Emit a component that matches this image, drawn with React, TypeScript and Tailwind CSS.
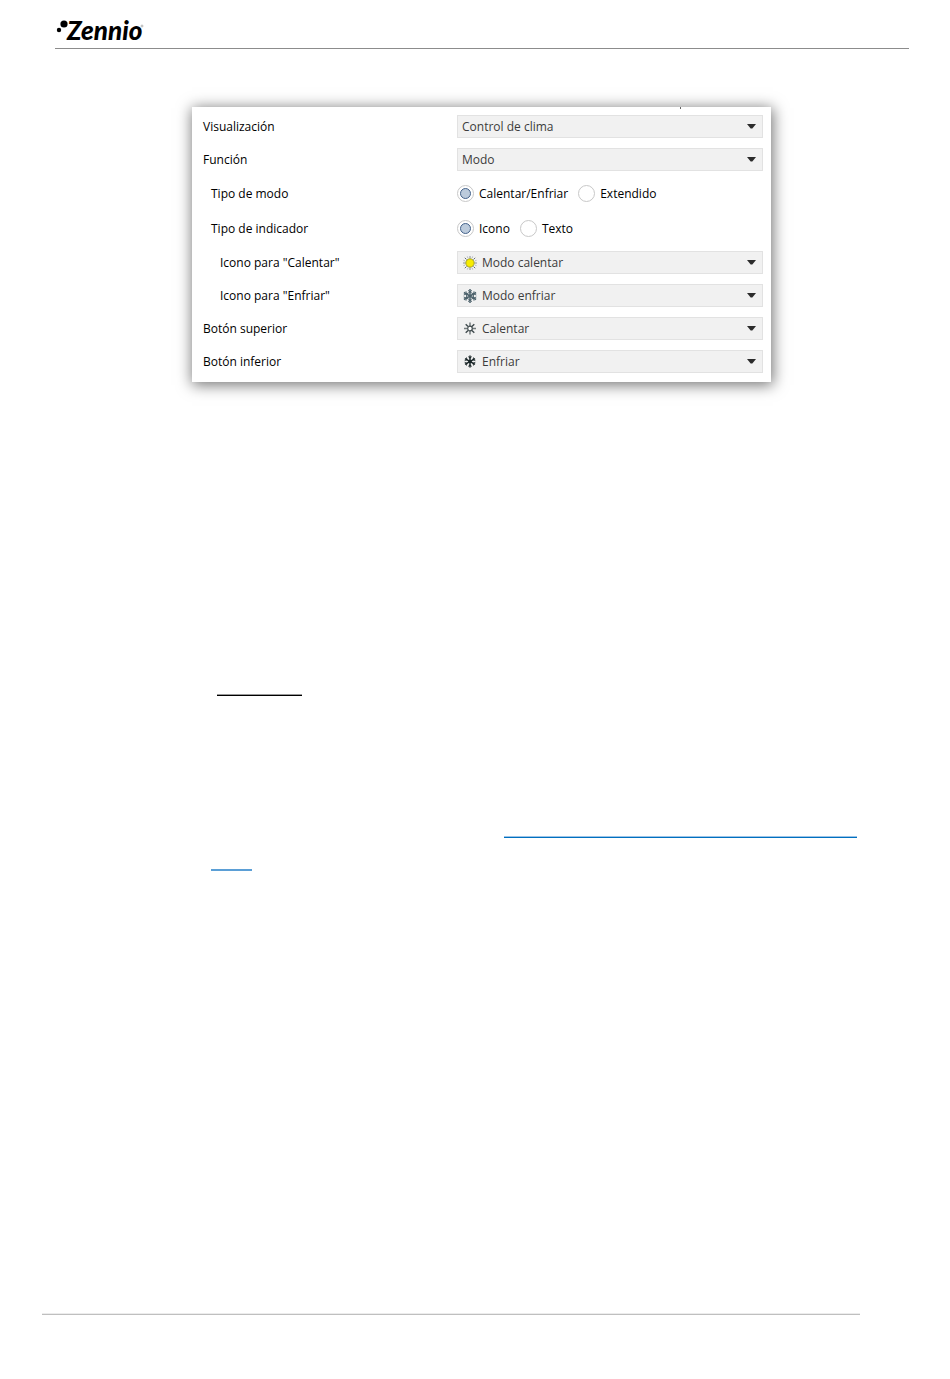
import type { ReactNode } from 'react';
import { clsx } from 'clsx';

const SunIcon = () => (
  <svg width="16" height="16" viewBox="0 0 16 16" fill="none">
    <g stroke="#5f6a6e" strokeWidth="1">
      <path d="M8 1v2.5M8 12.5V15M1 8h2.5M12.5 8H15" strokeOpacity="0.7" />
      <path d="M2.8 2.8l1.7 1.7M11.5 11.5l1.7 1.7M2.8 13.2l1.7-1.7M11.5 4.5l1.7-1.7" />
      <path d="M5.3 1.4l.6 1.6M10.7 1.4L10.1 3M5.3 14.6l.6-1.6M10.7 14.6l-.6-1.6M1.4 5.3l1.6.6M1.4 10.7l1.6-.6M14.6 5.3l-1.6.6M14.6 10.7l-1.6-.6" strokeOpacity="0.4" />
    </g>
    <circle cx="8" cy="8" r="4.2" fill="#f7ec00" stroke="#8a8a2c" strokeWidth="0.8" />
  </svg>
);

const SnowIcon = () => (
  <svg width="16" height="16" viewBox="0 0 16 16" fill="none" stroke="#4d626c">
    <path d="M8 1v14M1.9 4.5l12.2 7M1.9 11.5l12.2-7" strokeWidth="1.5" />
    <path d="M8 4l3.5 2v4L8 12l-3.5-2V6z" strokeWidth="0.9" />
    <path d="M6 2.4l2 1.4 2-1.4M6 13.6l2-1.4 2 1.4M1.7 7l2.6-1.1L4 3.3M14.3 7l-2.6-1.1.3-2.6M1.7 9l2.6 1.1-.3 2.6M14.3 9l-2.6 1.1.3 2.6" strokeWidth="1" />
  </svg>
);

const SmallSunIcon = () => (
  <svg width="16" height="16" viewBox="0 0 16 16" fill="none" stroke="#3f4a4d">
    <path d="M8 1.5V5M8 10v3.5M2 7.5h3.5M10.5 7.5H14" strokeWidth="1.5" strokeOpacity="0.7" />
    <path d="M3.7 3.2l2.4 2.4M9.9 9.4l2.4 2.4M3.7 11.8l2.4-2.4M9.9 5.6l2.4-2.4" strokeWidth="1.4" />
    <circle cx="8" cy="7.5" r="2.3" fill="#fff" strokeWidth="1.2" />
  </svg>
);

const SmallSnowIcon = () => (
  <svg width="16" height="16" viewBox="0 0 16 16" fill="none" stroke="#182426">
    <path d="M8 1.5v12M3 4.6l10 5.8M3 10.4l10-5.8" strokeWidth="1.5" />
    <path d="M6.2 2.6L8 4l1.8-1.4M6.2 12.4L8 11l1.8 1.4M2.7 6.6l2.2-.8-.4-2.3M13.3 6.6l-2.2-.8.4-2.3M2.7 8.4l2.2.8-.4 2.3M13.3 8.4l-2.2.8.4 2.3" strokeWidth="0.9" />
    <circle cx="8" cy="7.5" r="1.7" fill="#182426" stroke="none" />
  </svg>
);

const Logo = () => (
  <svg width="96" height="36" viewBox="0 0 96 36" role="img" aria-label="Zennio">
    <circle cx="4" cy="18" r="2.2" />
    <circle cx="9" cy="12" r="3.6" />
    <text x="12" y="28" fontSize="26" fontWeight="900" fontStyle="italic" fontFamily="Lato, sans-serif">
      Zennio
    </text>
    <circle cx="87" cy="14" r="1" fill="none" stroke="#777" strokeWidth="0.5" />
  </svg>
);

type Option = { label: string; checked?: boolean };

type Field = {
  id: string;
  label: string;
  level: number;
  value?: string;
  icon?: ReactNode;
  options?: Option[];
};

const fields: Field[] = [
  { id: 'visualizacion', label: 'Visualización', level: 0, value: 'Control de clima' },
  { id: 'funcion', label: 'Función', level: 0, value: 'Modo' },
  { id: 'tipo-modo', label: 'Tipo de modo', level: 1, options: [{ label: 'Calentar/Enfriar', checked: true }, { label: 'Extendido' }] },
  { id: 'tipo-indicador', label: 'Tipo de indicador', level: 1, options: [{ label: 'Icono', checked: true }, { label: 'Texto' }] },
  { id: 'icono-calentar', label: 'Icono para "Calentar"', level: 2, value: 'Modo calentar', icon: <SunIcon /> },
  { id: 'icono-enfriar', label: 'Icono para "Enfriar"', level: 2, value: 'Modo enfriar', icon: <SnowIcon /> },
  { id: 'boton-superior', label: 'Botón superior', level: 0, value: 'Calentar', icon: <SmallSunIcon /> },
  { id: 'boton-inferior', label: 'Botón inferior', level: 0, value: 'Enfriar', icon: <SmallSnowIcon /> },
];

const indents = ['pl-[11px]', 'pl-[19px]', 'pl-7'];

const SelectField = ({ field }: { field: Field }) => (
  <div className="relative flex-1">
    <select
      id={field.id}
      className={clsx(
        'block h-[23px] w-full appearance-none border border-[#e2e2e2] bg-[#f1f1f1] pr-6 text-[#3c3c3c]',
        field.icon ? 'pl-6' : 'pl-1'
      )}
    >
      <option>{field.value}</option>
    </select>
    {field.icon && <span className="pointer-events-none absolute left-[5px] top-1">{field.icon}</span>}
    <svg className="pointer-events-none absolute right-[7px] top-[9px]" width="9" height="5" viewBox="0 0 9 5" fill="#2b2b2b">
      <path d="M0 0h9L5.3 4.5H3.7z" />
    </svg>
  </div>
);

const RadioGroup = ({ field }: { field: Field }) => (
  <div role="radiogroup" aria-labelledby={field.id} className="flex flex-1 gap-[10px]">
    {field.options?.map((option) => (
      <label key={option.label} className="relative flex items-center gap-[5px]">
        <input type="radio" name={field.id} defaultChecked={option.checked} className="peer sr-only" />
        <span className="flex size-[17px] items-center justify-center rounded-full border border-[#c8c8c8] bg-white peer-checked:[&>span]:block">
          <span className="hidden size-[11px] rounded-full border border-[#44628a] bg-[#bccbdc]" />
        </span>
        {option.label}
      </label>
    ))}
  </div>
);

export default function App() {
  return (
    <div className="min-h-screen bg-white text-black">
      <header className="ml-[55px] mr-[41px] h-[49px] border-b border-[#8c8c8c] pt-3">
        <Logo />
      </header>

      <main className="pl-48 pr-[179px] pt-[58px]">
        <form className="relative bg-white pb-1 pr-2 pt-[3px] font-['Open_Sans','Noto_Sans',sans-serif] text-xs shadow-[1px_2px_14px_1px_rgba(0,0,0,0.55)]">
          <span className="absolute right-[90px] top-0 h-[2px] w-px bg-[#666]" />
          {fields.map((field) => (
            <div key={field.id} className={clsx('flex items-center', field.options ? 'h-[35px]' : 'h-[33px]')}>
              {field.options ? (
                <span id={field.id} className={clsx('w-[265px] shrink-0', indents[field.level])}>{field.label}</span>
              ) : (
                <label htmlFor={field.id} className={clsx('w-[265px] shrink-0', indents[field.level])}>{field.label}</label>
              )}
              {field.options ? <RadioGroup field={field} /> : <SelectField field={field} />}
            </div>
          ))}
        </form>
      </main>

      <section className="pl-[211px] pr-[93px] pt-[312px]">
        <div className="ml-[6px] h-[2px] w-[85px] border-b border-black bg-[#999]" />
        <div className="mt-[140px] flex justify-end">
          <div className="h-[2px] w-[353px] border-b border-[#0070c0] bg-[#9cc3e6]" />
        </div>
        <div className="mt-[31px] h-[2px] w-[41px] bg-[#5b9fd6]" />
      </section>

      <footer className="ml-[42px] mr-[90px] mt-[442px] h-[2px] border-b border-[#bfbfbf] bg-[#ececec]" />
    </div>
  );
}
